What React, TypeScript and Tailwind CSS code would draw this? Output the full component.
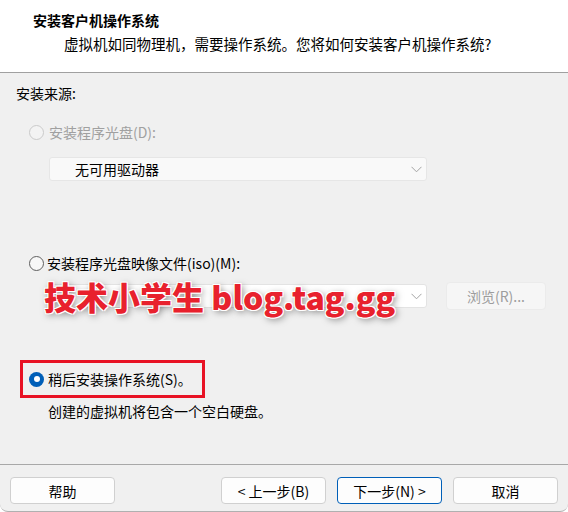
import React from 'react'

function Radio({ state }: { state: 'off' | 'disabled' | 'on' }) {
  if (state === 'on') {
    return (
      <span className="flex h-[15px] w-[15px] shrink-0 items-center justify-center rounded-full bg-[#005fb8]">
        <span className="h-[6px] w-[6px] rounded-full bg-white" />
      </span>
    )
  }
  return (
    <span
      className={
        state === 'disabled'
          ? 'h-[15px] w-[15px] shrink-0 rounded-full border border-[#cacaca] bg-[#f3f3f3]'
          : 'h-[15px] w-[15px] shrink-0 rounded-full border border-[#5f5f5f] bg-[#f7f7f7]'
      }
    />
  )
}

function Chevron() {
  return (
    <svg width="11" height="7" viewBox="0 0 11 7" className="shrink-0">
      <path d="M0.5 0.8 L5.5 5.8 L10.5 0.8" fill="none" stroke="#a3a3a3" strokeWidth="1" />
    </svg>
  )
}

function Btn({ children, primary = false }: { children: React.ReactNode; primary?: boolean }) {
  return (
    <div
      className={
        primary
          ? 'flex h-[27px] w-[105px] items-center justify-center rounded-[4px] border border-[#005fb8] bg-[#fdfdfd] text-[14px] text-black'
          : 'flex h-[27px] w-[105px] items-center justify-center rounded-[4px] border border-[#d0d0d0] bg-[#fdfdfd] text-[14px] text-black'
      }
    >
      {children}
    </div>
  )
}

export default function App() {
  return (
    <div className="h-[512px] w-[568px] overflow-hidden bg-white font-['Noto_Sans_CJK_SC',sans-serif] leading-[20px] text-black">
      {/* Header */}
      <div className="h-[73px] border-b border-[#a0a0a0] bg-white pt-[10px]">
        <p className="pl-[33px] text-[14px] font-bold">安装客户机操作系统</p>
        <p className="mt-[4px] pl-[64px] text-[14.5px]">
          虚拟机如同物理机，需要操作系统。您将如何安装客户机操作系统?
        </p>
      </div>

      {/* Body */}
      <div className="flex h-[391px] flex-col bg-[#f0f0f0] pl-[16px] text-[14px]">
        <p className="mt-[10px]">安装来源:</p>

        <div className="ml-[13px] mt-[19px] flex items-center gap-[5px] text-[#a0a0a0]">
          <Radio state="disabled" />
          <span>安装程序光盘(D):</span>
        </div>

        <div className="ml-[33px] mt-[15px] flex h-[24px] w-[378px] items-center justify-between rounded-[3px] border border-[#e6e6e6] bg-[#f9f9f9] pl-[25px] pr-[4px]">
          <span>无可用驱动器</span>
          <Chevron />
        </div>

        <div className="ml-[13px] mt-[72px] flex items-center gap-[3px]">
          <Radio state="off" />
          <span>安装程序光盘映像文件(iso)(M):</span>
        </div>

        <div className="relative ml-[33px] mt-[9px] flex h-[28px] items-center">
          <div className="flex h-[24px] w-[378px] items-center justify-end rounded-[3px] border border-[#e3e3e3] bg-white pr-[4px]">
            <Chevron />
          </div>
          <div className="ml-[19px] flex h-[28px] w-[100px] items-center justify-center rounded-[4px] border border-[#ebebeb] bg-[#f6f6f6] text-[#9d9d9d]">
            浏览(R)...
          </div>
          {/* watermark */}
          <div className="absolute left-[-5px] top-[-1px] flex h-[30px] items-center">
            <span className="whitespace-nowrap text-[32px] font-black leading-none text-[#e8212d] [text-shadow:1px_1px_0_#fff,-1px_-1px_0_#fff,1px_-1px_0_#fff,-1px_1px_0_#fff,2px_2px_7px_rgba(0,0,0,0.5)]">
              技术小学生 blog.tag.gg
            </span>
          </div>
        </div>

        <div className="ml-[4px] mt-[50px] flex h-[38px] w-[185px] items-center gap-[4px] border-[3px] border-[#e81224] pl-[6px]">
          <Radio state="on" />
          <span>稍后安装操作系统(S)。</span>
        </div>

        <p className="ml-[32px] mt-[3px]">创建的虚拟机将包含一个空白硬盘。</p>
      </div>

      {/* Footer */}
      <div className="h-[48px] rounded-b-[8px] border-t border-b border-[#a8a8a8] border-b-[#b0b0b0] bg-[#f0f0f0] pt-[12px]">
        <div className="flex px-[10px]">
          <Btn>帮助</Btn>
          <div className="ml-auto flex gap-[11px]">
            <Btn>&lt; 上一步(B)</Btn>
            <Btn primary>下一步(N) &gt;</Btn>
            <Btn>取消</Btn>
          </div>
        </div>
      </div>
    </div>
  )
}
